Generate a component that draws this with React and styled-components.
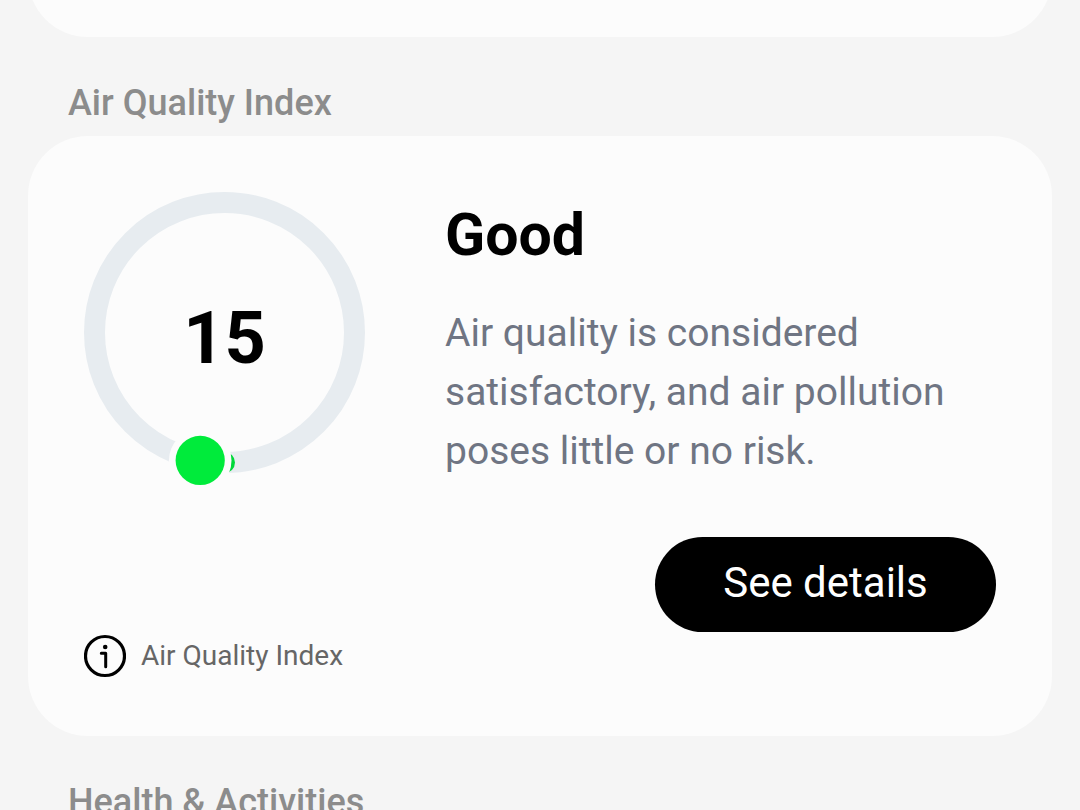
import React from "react";
import styled, { createGlobalStyle } from "styled-components";

const GlobalStyle = createGlobalStyle`
  * { box-sizing: border-box; }
  html, body, #root { height: 100%; }
  body { margin: 0; background: #f5f5f5; font-family: Roboto, "Liberation Sans", sans-serif; }
  h2, h3, p { margin: 0; }
`;

const Screen = styled.main`
  height: 100%;
  overflow: hidden;
  padding: 0 28px;
`;

const PreviousCard = styled.section`
  height: 120px;
  margin-top: -83px;
  border-radius: 60px;
  background: #fcfcfc;
`;

const SectionTitle = styled.h2`
  padding: 44px 40px 11px;
  color: #8c8c8c;
  font-size: 36px;
  line-height: 44px;
  font-weight: 500;
`;

const Card = styled.section`
  display: grid;
  grid-template-columns: 281px 1fr;
  column-gap: 80px;
  min-height: 600px;
  padding: 56px 56px 58px;
  border-radius: 60px;
  background: #fcfcfc;
`;

const GaugeColumn = styled.div`
  display: flex;
  flex-direction: column;
  justify-content: space-between;
`;

const Gauge = styled.div`
  display: grid;
  width: 281px;
  height: 281px;
  > * { grid-area: 1 / 1; }
`;

const Ring = styled.svg`
  width: 100%;
  height: 100%;
  overflow: visible;
`;

const Score = styled.strong`
  place-self: center;
  padding-top: 12px;
  font-size: 72px;
  line-height: 84px;
  font-weight: 700;
`;

const Source = styled.div`
  display: flex;
  align-items: center;
  gap: 15px;
  color: #666;
  font-size: 28px;
  line-height: 44px;
`;

const Details = styled.div`
  display: flex;
  flex-direction: column;
`;

const Rating = styled.h3`
  padding-top: 8px;
  font-size: 59px;
  line-height: 70px;
  font-weight: 700;
`;

const Advice = styled.p`
  max-width: 520px;
  padding-top: 34px;
  color: #6f7583;
  font-size: 39px;
  line-height: 59px;
`;

const DetailsButton = styled.button`
  align-self: flex-end;
  width: 341px;
  height: 95px;
  margin-top: 56px;
  padding: 0 0 4px;
  border: 0;
  border-radius: 48px;
  background: #000;
  color: #fff;
  font-family: inherit;
  font-size: 42px;
  line-height: 48px;
`;

const InfoIcon = () => (
  <svg width="42" height="44" viewBox="0 0 42 44" fill="none" stroke="#000" strokeWidth="3.2" strokeLinecap="round" strokeLinejoin="round" aria-hidden="true">
    <circle cx="21" cy="22" r="19.5" />
    <path d="M17.3 19.3h4.4v13.4" strokeWidth="3" />
    <circle cx="21.2" cy="13" r="2.3" fill="#000" stroke="none" />
  </svg>
);

export default function App() {
  return (
    <>
      <GlobalStyle />
      <Screen>
        <PreviousCard />
        <SectionTitle>Air Quality Index</SectionTitle>
        <Card>
          <GaugeColumn>
            <Gauge>
              <Ring viewBox="0 0 281 281" aria-hidden="true">
                <circle cx="140.5" cy="140.5" r="130" fill="none" stroke="#e7ecf0" strokeWidth="21" />
                <circle cx="140.5" cy="270.5" r="10.5" fill="#00d83a" />
                <circle cx="116.2" cy="268.4" r="31.3" fill="#fcfcfc" />
                <circle cx="116.2" cy="268.4" r="24.6" fill="#00eb3b" />
              </Ring>
              <Score>15</Score>
            </Gauge>
            <Source>
              <InfoIcon />
              <span>Air Quality Index</span>
            </Source>
          </GaugeColumn>
          <Details>
            <Rating>Good</Rating>
            <Advice>Air quality is considered satisfactory, and air pollution poses little or no risk.</Advice>
            <DetailsButton type="button">See details</DetailsButton>
          </Details>
        </Card>
        <SectionTitle>Health &amp; Activities</SectionTitle>
      </Screen>
    </>
  );
}
